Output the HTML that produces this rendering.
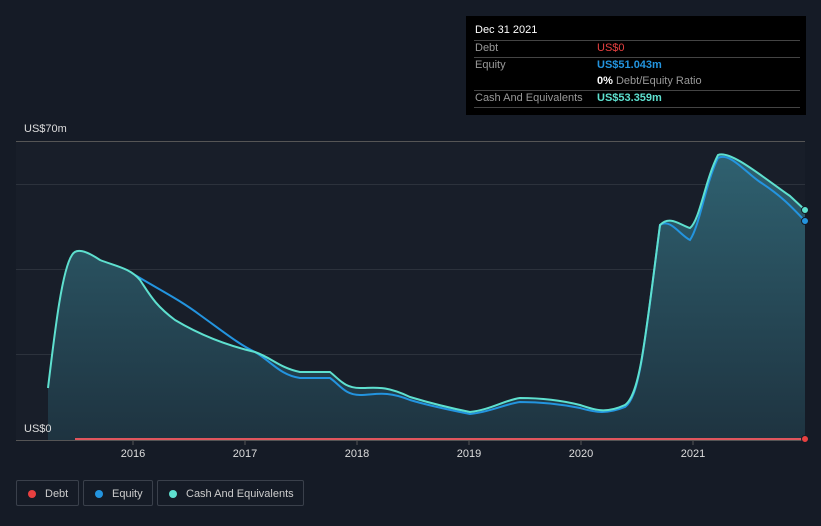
<!DOCTYPE html>
<html><head><meta charset="utf-8"><style>
body{margin:0;width:821px;height:526px;background:#151b26;font-family:"Liberation Sans",sans-serif;overflow:hidden;position:relative}
.tt{position:absolute;left:466px;top:16px;width:340px;height:99px;background:#000;color:#ddd;font-size:11px}
.tt .r{position:absolute;left:8px;right:6px;border-top:1px solid #444}
.leg{position:absolute;top:480px;height:26px;border:1px solid #3a404b;border-radius:2px;color:#ccc;font-size:11px;line-height:26px;box-sizing:border-box;white-space:nowrap}
.leg i{position:absolute;left:11px;top:9px;width:8px;height:8px;border-radius:50%}
</style></head><body>
<svg width="821" height="526" style="position:absolute;left:0;top:0">
<defs><linearGradient id="g" x1="0" y1="0" x2="0" y2="1"><stop offset="0" stop-color="#2f6170"/><stop offset="1" stop-color="#1e3340"/></linearGradient></defs>
<rect x="16" y="141" width="789" height="299" fill="#181e29"/>
<g stroke="#2c323c" stroke-width="1"><line x1="16" y1="141.5" x2="805" y2="141.5" stroke="#555"/><line x1="16" y1="184.5" x2="805" y2="184.5"/><line x1="16" y1="269.5" x2="805" y2="269.5"/><line x1="16" y1="354.5" x2="805" y2="354.5"/></g>
<path d="M48,388 C55,330 62,270 72,255 C76,248 85,250 100,260 C115,266 130,268 140,280 C150,295 155,305 175,320 C200,335 225,345 255,352 C272,358 280,368 300,372 L330,372 C340,380 345,388 360,388 C375,388 385,385 410,397 C430,403 450,408 470,412 C490,410 505,400 520,398 C540,398 560,400 580,405 C595,410 605,414 625,405 C640,395 645,340 660,225 C670,215 680,225 690,228 C700,220 705,180 718,155 C730,150 760,175 790,196 L805,210 L805,440 L48,440 Z" fill="url(#g)"/>
<path d="M135,275 C160,290 180,300 200,315 C225,333 240,345 255,352 C272,362 280,375 300,378 L330,378 C340,385 345,395 360,395 C375,395 385,390 410,400 C430,406 450,410 470,414 C490,412 505,404 520,402 C540,402 560,404 580,408 C595,412 605,415 625,407 C640,397 645,340 660,225 C670,218 680,235 690,240 C700,225 705,185 718,158 C730,152 745,172 760,182 C780,195 790,205 805,221" fill="none" stroke="#2394df" stroke-width="2"/>
<path d="M48,388 C55,330 62,270 72,255 C76,248 85,250 100,260 C115,266 130,268 140,280 C150,295 155,305 175,320 C200,335 225,345 255,352 C272,358 280,368 300,372 L330,372 C340,380 345,388 360,388 C375,388 385,385 410,397 C430,403 450,408 470,412 C490,410 505,400 520,398 C540,398 560,400 580,405 C595,410 605,414 625,405 C640,395 645,340 660,225 C670,215 680,225 690,228 C700,220 705,180 718,155 C730,150 760,175 790,196 L805,210" fill="none" stroke="#5ee0cf" stroke-width="2"/>
<line x1="75" y1="439" x2="805" y2="439" stroke="#e0555d" stroke-width="2"/>
<line x1="16" y1="440.5" x2="805" y2="440.5" stroke="#555"/>
<circle cx="805" cy="439" r="3.5" fill="#e84040" stroke="#151b26"/>
<circle cx="805" cy="221" r="3.5" fill="#2394df" stroke="#151b26"/>
<circle cx="805" cy="210" r="3.5" fill="#5ee0cf" stroke="#151b26"/>
<g stroke="#555"><line x1="133" y1="441" x2="133" y2="445"/><line x1="245" y1="441" x2="245" y2="445"/><line x1="357" y1="441" x2="357" y2="445"/><line x1="469" y1="441" x2="469" y2="445"/><line x1="581" y1="441" x2="581" y2="445"/><line x1="693" y1="441" x2="693" y2="445"/></g>
<g fill="#ddd" font-size="11" font-family="Liberation Sans" text-anchor="middle"><text x="133" y="457">2016</text><text x="245" y="457">2017</text><text x="357" y="457">2018</text><text x="469" y="457">2019</text><text x="581" y="457">2020</text><text x="693" y="457">2021</text></g>
<text x="24" y="132" fill="#ddd" font-size="11" font-family="Liberation Sans">US$70m</text>
<text x="24" y="432" fill="#ddd" font-size="11" font-family="Liberation Sans">US$0</text>
</svg>
<div class="tt">
<div style="position:absolute;left:9px;top:8px;color:#fff">Dec 31 2021</div>
<div class="r" style="top:24px"></div>
<div style="position:absolute;left:9px;top:26px;color:#999">Debt</div><div style="position:absolute;left:131px;top:26px;color:#e84040">US$0</div>
<div class="r" style="top:41px"></div>
<div style="position:absolute;left:9px;top:43px;color:#999">Equity</div><div style="position:absolute;left:131px;top:43px;color:#2394df;font-weight:bold">US$51.043m</div>
<div style="position:absolute;left:131px;top:59px;color:#999"><b style="color:#fff">0%</b> Debt/Equity Ratio</div>
<div class="r" style="top:74px"></div>
<div style="position:absolute;left:9px;top:76px;color:#999">Cash And Equivalents</div><div style="position:absolute;left:131px;top:76px;color:#5ee0cf;font-weight:bold">US$53.359m</div>
<div class="r" style="top:91px"></div>
</div>
<div class="leg" style="left:16px;width:63px"><i style="background:#e84040"></i><span style="position:absolute;left:28px">Debt</span></div>
<div class="leg" style="left:83px;width:70px"><i style="background:#2394df"></i><span style="position:absolute;left:28px">Equity</span></div>
<div class="leg" style="left:157px;width:147px"><i style="background:#5ee0cf"></i><span style="position:absolute;left:28px">Cash And Equivalents</span></div>
</body></html>
